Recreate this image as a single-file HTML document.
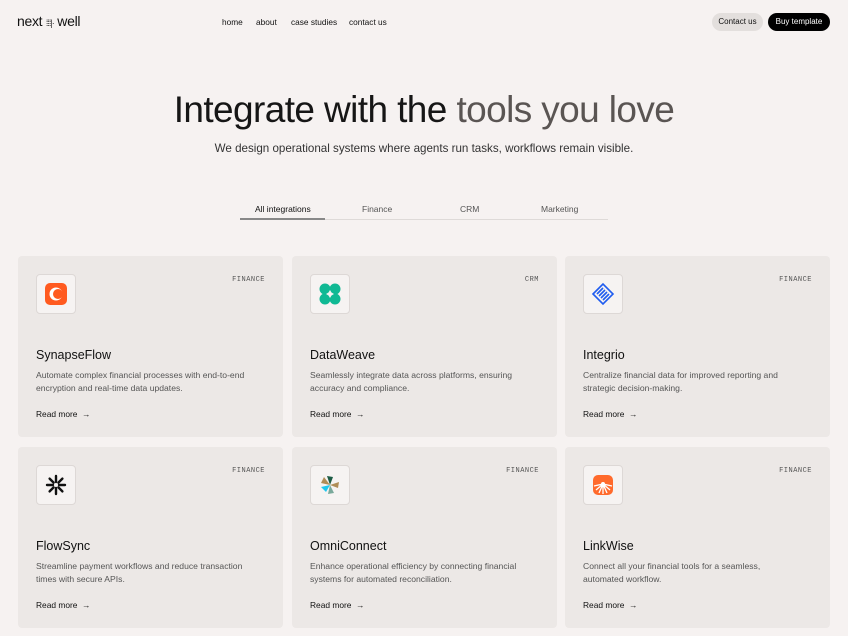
<!DOCTYPE html>
<html><head><meta charset="utf-8"><style>
*{margin:0;padding:0;box-sizing:border-box}
body{width:848px;height:636px;overflow:hidden;background:#f6f2f1;font-family:"Liberation Sans",sans-serif;color:#111;position:relative}
.abs{position:absolute}
.nav a{position:absolute;top:17px;font-size:8.3px;color:#111;text-decoration:none}
.card{position:absolute;width:265px;height:181px;background:#ece8e6;border-radius:4px}
.ico{position:absolute;left:18px;top:18px;width:40px;height:40px;background:#f6f3f2;border:1px solid #ddd8d6;border-radius:4px;display:flex;align-items:center;justify-content:center}
.tag{position:absolute;right:18px;top:20px;font-family:"Liberation Mono",monospace;font-size:7px;letter-spacing:.5px;color:#555}
.t{position:absolute;left:18px;top:92px;font-size:12.5px;color:#111}
.d{position:absolute;left:18px;top:113px;font-size:8.6px;line-height:13px;color:#555;width:228px}
.r{position:absolute;left:18px;top:153px;font-size:8.4px;color:#111}
</style></head><body>
<div class="abs" style="left:17px;top:13px;font-size:14px;letter-spacing:-.3px">next <span style="font-size:9px;letter-spacing:-1px;color:#333">⁞⁞⁞|·</span> well</div>
<div class="nav"><a style="left:222px">home</a><a style="left:256px">about</a><a style="left:291px">case studies</a><a style="left:349px">contact us</a></div>
<div class="abs" style="left:712px;top:13px;width:51px;height:18px;border-radius:9px;background:#e3dfdd;font-size:8px;text-align:center;line-height:18px">Contact us</div>
<div class="abs" style="left:768px;top:13px;width:62px;height:18px;border-radius:9px;background:#000;color:#fff;font-size:8px;text-align:center;line-height:18px">Buy template</div>
<div class="abs" style="left:0;width:848px;top:89px;text-align:center;font-size:37px;letter-spacing:-.6px;color:#161616">Integrate with the <span style="color:#5a5553">tools you love</span></div>
<div class="abs" style="left:0;width:848px;top:142px;text-align:center;font-size:11.6px;color:#333">We design operational systems where agents run tasks, workflows remain visible.</div>
<div class="abs" style="left:240px;top:219px;width:368px;height:1px;background:#dedad8"></div>
<div class="abs" style="left:240px;top:218px;width:85px;height:2px;background:#888"></div>
<div class="abs" style="left:255px;top:204px;font-size:8.5px">All integrations</div>
<div class="abs" style="left:362px;top:204px;font-size:8.5px;color:#555">Finance</div>
<div class="abs" style="left:460px;top:204px;font-size:8.5px;color:#555">CRM</div>
<div class="abs" style="left:541px;top:204px;font-size:8.5px;color:#555">Marketing</div>

<div class="card" style="left:18px;top:256px"><div class="ico"><svg width="24" height="24"><rect x="1" y="1" width="22" height="22" rx="5" fill="#ff5a1f"/><circle cx="12" cy="12" r="6.5" fill="#fff"/><circle cx="14" cy="12" r="5" fill="#ff5a1f"/></svg></div><div class="tag">FINANCE</div><div class="t">SynapseFlow</div><div class="d">Automate complex financial processes with end-to-end encryption and real-time data updates.</div><div class="r">Read more &nbsp;→</div></div>
<div class="card" style="left:292px;top:256px"><div class="ico"><svg width="24" height="24" fill="#10b994"><circle cx="7" cy="7" r="5.5"/><circle cx="17" cy="7" r="5.5"/><circle cx="7" cy="17" r="5.5"/><circle cx="17" cy="17" r="5.5"/><path d="M12 8l1.5 2.5L16 12l-2.5 1.5L12 16l-1.5-2.5L8 12l2.5-1.5z" fill="#f6f3f2"/></svg></div><div class="tag">CRM</div><div class="t">DataWeave</div><div class="d">Seamlessly integrate data across platforms, ensuring accuracy and compliance.</div><div class="r">Read more &nbsp;→</div></div>
<div class="card" style="left:565px;top:256px"><div class="ico"><svg width="24" height="24" stroke="#1f5cf0" stroke-width="1.6" fill="none"><path d="M2 12l10-10 10 10-10 10z" /><path d="M6 12l6-6M8 14l6-6M10 16l6-6M12 18l6-6"/></svg></div><div class="tag">FINANCE</div><div class="t">Integrio</div><div class="d" style="width:215px">Centralize financial data for improved reporting and strategic decision-making.</div><div class="r">Read more &nbsp;→</div></div>

<div class="card" style="left:18px;top:447px"><div class="ico"><svg width="24" height="24" stroke="#111" stroke-width="2.4" stroke-linecap="round"><path d="M12 3v6M12 15v6M3 12h6M15 12h6M5.6 5.6l4 4M14.4 14.4l4 4M18.4 5.6l-4 4M9.6 14.4l-4 4"/></svg></div><div class="tag">FINANCE</div><div class="t">FlowSync</div><div class="d" style="width:220px">Streamline payment workflows and reduce transaction times with secure APIs.</div><div class="r">Read more &nbsp;→</div></div>
<div class="card" style="left:292px;top:447px"><div class="ico"><svg width="24" height="24"><path d="M12 12L9 3l6 1z" fill="#1d5c45"/><path d="M12 12l9-3-1 6z" fill="#b08d57"/><path d="M12 12l4 8-6 1z" fill="#7aa99b"/><path d="M12 12l-4 7-5-5z" fill="#1ec8f0"/><path d="M12 12L3 10l3-6z" fill="#b08d57"/></svg></div><div class="tag">FINANCE</div><div class="t">OmniConnect</div><div class="d">Enhance operational efficiency by connecting financial systems for automated reconciliation.</div><div class="r">Read more &nbsp;→</div></div>
<div class="card" style="left:565px;top:447px"><div class="ico"><svg width="24" height="24"><rect x="2" y="2" width="20" height="20" rx="5" fill="#ff6a2c"/><g stroke="#fff" stroke-width="1.3"><path d="M12 11v10M12 11l-7 6M12 11l7 6M12 11l-4 9M12 11l4 9M12 11l-9 2M12 11l9 2"/></g><circle cx="12" cy="11" r="2" fill="#fff"/></svg></div><div class="tag">FINANCE</div><div class="t">LinkWise</div><div class="d" style="width:200px">Connect all your financial tools for a seamless, automated workflow.</div><div class="r">Read more &nbsp;→</div></div>
</body></html>
